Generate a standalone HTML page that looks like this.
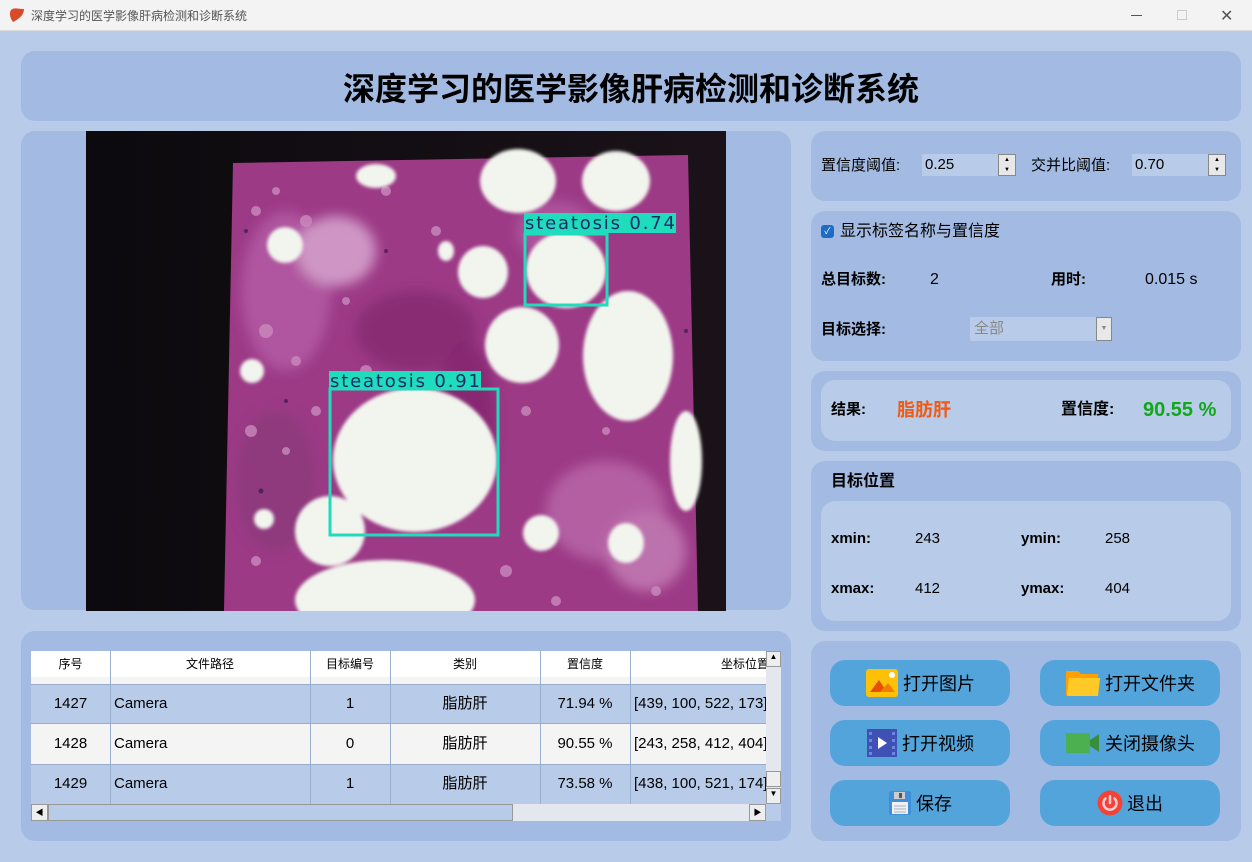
<!DOCTYPE html>
<html><head><meta charset="utf-8"><style>
*{margin:0;padding:0;box-sizing:border-box}
body{width:1252px;height:862px;position:relative;overflow:hidden;background:#b8cbe8;font-family:"Liberation Sans","Noto Sans CJK SC",sans-serif;color:#000}
.a{position:absolute}
.p{position:absolute;background:#a3bbe2;border-radius:14px}
.in{position:absolute;background:#b8cbe8;border-radius:14px}
.btn{position:absolute;width:180px;height:46px;background:#54a4dc;border-radius:15px;font-size:18px;display:flex;align-items:center;justify-content:center;gap:4px}
.t{font-size:15px;line-height:20px}
.b{font-weight:bold}
.cell{position:absolute;font-size:15px;text-align:center;line-height:40px}
.vl{position:absolute;width:1px;background:#9aaed0}
</style></head><body>
<div class="a" style="left:0;top:0;width:1252px;height:31px;background:#f3f3f3;border-bottom:1px solid #ddd"></div>
<svg class="a" style="left:9px;top:7px" width="16" height="16" viewBox="0 0 16 16"><path d="M2 3 C5 0 9 2 15 2 C15 8 10 12 4 15 C1 11 0 6 2 3Z" fill="#d94a2a"/></svg>
<div class="a" style="left:31px;top:7px;font-size:12px;color:#555">深度学习的医学影像肝病检测和诊断系统</div>
<div class="a" style="left:1131px;top:15px;width:11px;height:1px;background:#555"></div>
<div class="a" style="left:1177px;top:10px;width:10px;height:10px;border:1px solid #ccc"></div>
<div class="a" style="left:1220px;top:6px;font-size:16px;color:#555">✕</div>

<div class="p" style="left:21px;top:51px;width:1220px;height:70px"></div>
<div class="a b" style="left:21px;top:64px;width:1220px;text-align:center;font-size:32px">深度学习的医学影像肝病检测和诊断系统</div>

<div class="p" style="left:21px;top:131px;width:770px;height:479px"></div>
<svg class="a" style="left:86px;top:131px" width="640" height="480" viewBox="0 0 640 480">
<defs><filter id="bl"><feGaussianBlur stdDeviation="6"/></filter><filter id="bl2"><feGaussianBlur stdDeviation="1.5"/></filter>
<linearGradient id="lg" x1="0" x2="1"><stop offset="0" stop-color="#0c0a0e"/><stop offset="1" stop-color="#1a1218"/></linearGradient></defs>
<rect width="640" height="480" fill="url(#lg)"/>
<polygon points="147,32 602,24 612,480 138,480" fill="#9c3a86"/>
<g filter="url(#bl)" opacity=".85">
<ellipse cx="200" cy="160" rx="45" ry="80" fill="#b45aa4"/><ellipse cx="330" cy="200" rx="60" ry="40" fill="#862a72"/><ellipse cx="520" cy="380" rx="60" ry="50" fill="#b866a8"/><ellipse cx="250" cy="120" rx="40" ry="35" fill="#d8a6d0"/><ellipse cx="470" cy="100" rx="40" ry="30" fill="#b058a0"/><ellipse cx="380" cy="290" rx="30" ry="80" fill="#852870"/><ellipse cx="190" cy="350" rx="40" ry="70" fill="#8c3a7c"/><ellipse cx="560" cy="420" rx="40" ry="40" fill="#c27cb4"/>
</g>
<g fill="#c98abd" opacity=".8">
<circle cx="170" cy="80" r="5"/><circle cx="190" cy="60" r="4"/><circle cx="220" cy="90" r="6"/><circle cx="180" cy="200" r="7"/><circle cx="210" cy="230" r="5"/><circle cx="165" cy="300" r="6"/><circle cx="200" cy="320" r="4"/><circle cx="230" cy="280" r="5"/><circle cx="280" cy="240" r="6"/><circle cx="170" cy="430" r="5"/><circle cx="420" cy="440" r="6"/><circle cx="470" cy="470" r="5"/><circle cx="350" cy="100" r="5"/><circle cx="260" cy="170" r="4"/><circle cx="300" cy="60" r="5"/><circle cx="570" cy="460" r="5"/><circle cx="520" cy="300" r="4"/><circle cx="440" cy="280" r="5"/>
</g>
<g fill="#3a1850" opacity=".7">
<circle cx="160" cy="100" r="2"/><circle cx="200" cy="270" r="2"/><circle cx="175" cy="360" r="2.5"/><circle cx="540" cy="410" r="2"/><circle cx="600" cy="200" r="2"/><circle cx="460" cy="390" r="2"/><circle cx="300" cy="120" r="2"/></g>
<g filter="url(#bl2)" fill="#f2f4ee">
<ellipse cx="329" cy="329" rx="82" ry="72"/>
<ellipse cx="480" cy="139" rx="40" ry="38"/>
<ellipse cx="432" cy="50" rx="38" ry="32"/>
<ellipse cx="530" cy="50" rx="34" ry="30"/>
<ellipse cx="397" cy="141" rx="25" ry="26"/>
<ellipse cx="436" cy="214" rx="37" ry="38"/>
<ellipse cx="542" cy="225" rx="45" ry="65"/>
<ellipse cx="299" cy="469" rx="90" ry="40"/>
<ellipse cx="244" cy="400" rx="35" ry="35"/>
<ellipse cx="199" cy="114" rx="18" ry="18"/>
<ellipse cx="290" cy="45" rx="20" ry="12"/>
<ellipse cx="600" cy="330" rx="16" ry="50"/>
<ellipse cx="455" cy="402" rx="18" ry="18"/>
<ellipse cx="540" cy="412" rx="18" ry="20"/>
<ellipse cx="178" cy="388" rx="10" ry="10"/>
<ellipse cx="240" cy="470" rx="25" ry="18"/>
<ellipse cx="166" cy="240" rx="12" ry="12"/>
<ellipse cx="360" cy="120" rx="8" ry="10"/>
</g>
<g fill="none" stroke="#1fdcbc" stroke-width="3">
<rect x="439" y="103" width="82" height="71"/>
<rect x="244" y="258" width="168" height="146"/>
</g>
<rect x="438" y="82" width="152" height="20" fill="#1fdcbc"/>
<rect x="243" y="240" width="152" height="19" fill="#1fdcbc"/>
<text x="439" y="98" font-family="DejaVu Sans,sans-serif" font-size="18" fill="#1c2c66" textLength="150">steatosis  0.74</text>
<text x="244" y="256" font-family="DejaVu Sans,sans-serif" font-size="18" fill="#1c2c66" textLength="150">steatosis  0.91</text>
</svg>

<div class="p" style="left:21px;top:631px;width:770px;height:210px"></div>
<div class="a" style="left:31px;top:651px;width:750px;height:170px;background:#f4f4f4;overflow:hidden">
<div class="a" style="left:0;top:0;width:735px;height:26px;background:#fff"></div>
<div class="a" style="left:0;top:33px;width:735px;height:40px;background:#b8cbe8;border-top:1px solid #9aaed0;border-bottom:1px solid #9aaed0"></div>
<div class="a" style="left:0;top:113px;width:735px;height:40px;background:#b8cbe8;border-top:1px solid #9aaed0"></div>
<div class="vl" style="left:79px;top:0;height:153px"></div><div class="vl" style="left:279px;top:0;height:153px"></div><div class="vl" style="left:359px;top:0;height:153px"></div><div class="vl" style="left:509px;top:0;height:153px"></div><div class="vl" style="left:599px;top:0;height:153px"></div>
<div class="cell" style="left:0;top:-7px;width:79px;font-size:12px">序号</div>
<div class="cell" style="left:79px;top:-7px;width:200px;font-size:12px">文件路径</div>
<div class="cell" style="left:279px;top:-7px;width:80px;font-size:12px">目标编号</div>
<div class="cell" style="left:359px;top:-7px;width:150px;font-size:12px">类别</div>
<div class="cell" style="left:509px;top:-7px;width:90px;font-size:12px">置信度</div>
<div class="cell" style="left:599px;top:-7px;width:230px;font-size:12px">坐标位置</div>
<div class="cell" style="left:0;top:33px;width:79px">1427</div><div class="cell" style="left:83px;top:33px;text-align:left">Camera</div><div class="cell" style="left:279px;top:33px;width:80px">1</div><div class="cell" style="left:359px;top:33px;width:150px">脂肪肝</div><div class="cell" style="left:509px;top:33px;width:90px">71.94 %</div><div class="cell" style="left:603px;top:33px;text-align:left;white-space:nowrap">[439, 100, 522, 173]</div>
<div class="cell" style="left:0;top:73px;width:79px">1428</div><div class="cell" style="left:83px;top:73px;text-align:left">Camera</div><div class="cell" style="left:279px;top:73px;width:80px">0</div><div class="cell" style="left:359px;top:73px;width:150px">脂肪肝</div><div class="cell" style="left:509px;top:73px;width:90px">90.55 %</div><div class="cell" style="left:603px;top:73px;text-align:left;white-space:nowrap">[243, 258, 412, 404]</div>
<div class="cell" style="left:0;top:113px;width:79px">1429</div><div class="cell" style="left:83px;top:113px;text-align:left">Camera</div><div class="cell" style="left:279px;top:113px;width:80px">1</div><div class="cell" style="left:359px;top:113px;width:150px">脂肪肝</div><div class="cell" style="left:509px;top:113px;width:90px">73.58 %</div><div class="cell" style="left:603px;top:113px;text-align:left;white-space:nowrap">[438, 100, 521, 174]</div>
<div class="a" style="left:735px;top:0;width:15px;height:153px;background:#e4e8ee"></div>
<div class="a" style="left:735px;top:0;width:15px;height:16px;background:#eee;border:1px solid #999;font-size:8px;text-align:center">▲</div>
<div class="a" style="left:735px;top:120px;width:15px;height:16px;background:#eee;border:1px solid #999"></div>
<div class="a" style="left:735px;top:137px;width:15px;height:16px;background:#eee;border:1px solid #999;font-size:8px;text-align:center">▼</div>
<div class="a" style="left:0;top:153px;width:735px;height:17px;background:#e4e8ee"></div>
<div class="a" style="left:0;top:153px;width:17px;height:17px;background:#eee;border:1px solid #999;font-size:8px;text-align:center;line-height:15px">◀</div>
<div class="a" style="left:17px;top:153px;width:465px;height:17px;background:#b8cbe8;border:1px solid #999"></div>
<div class="a" style="left:718px;top:153px;width:17px;height:17px;background:#eee;border:1px solid #999;font-size:8px;text-align:center;line-height:15px">▶</div>
<div class="a" style="left:735px;top:153px;width:15px;height:17px;background:#b8cbe8"></div>
</div>

<div class="p" style="left:811px;top:131px;width:430px;height:70px"></div>
<div class="a t" style="left:821px;top:156px">置信度阈值:</div>
<div class="a" style="left:922px;top:154px;width:76px;height:22px;background:#b8cbe8;font-size:15px;line-height:22px;padding:0 3px">0.25</div>
<div class="a" style="left:998px;top:154px;width:18px;height:22px;background:#e8e8e8;border:1px solid #888;font-size:6px;line-height:10px;text-align:center">▲<br>▼</div>
<div class="a t" style="left:1031px;top:156px">交并比阈值:</div>
<div class="a" style="left:1132px;top:154px;width:76px;height:22px;background:#b8cbe8;font-size:15px;line-height:22px;padding:0 3px">0.70</div>
<div class="a" style="left:1208px;top:154px;width:18px;height:22px;background:#e8e8e8;border:1px solid #888;font-size:6px;line-height:10px;text-align:center">▲<br>▼</div>

<div class="p" style="left:811px;top:211px;width:430px;height:150px"></div>
<div class="a" style="left:821px;top:225px;width:13px;height:13px;background:#1f6cc6;border-radius:3px;color:#fff;font-size:9px;text-align:center;line-height:13px">✓</div>
<div class="a" style="left:840px;top:221px;font-size:16px;line-height:22px">显示标签名称与置信度</div>
<div class="a b t" style="left:821px;top:270px">总目标数:</div>
<div class="a" style="left:930px;top:269px;font-size:16px;line-height:22px">2</div>
<div class="a b t" style="left:1051px;top:270px">用时:</div>
<div class="a" style="left:1145px;top:269px;font-size:16px;line-height:22px">0.015 s</div>
<div class="a b t" style="left:821px;top:320px">目标选择:</div>
<div class="a" style="left:970px;top:317px;width:127px;height:24px;background:#b8cbe8;color:#888;font-size:15px;line-height:24px;padding:0 4px">全部</div>
<div class="a" style="left:1096px;top:317px;width:16px;height:24px;background:#e8e8e8;border:1px solid #888;font-size:7px;color:#888;text-align:center;line-height:22px">▼</div>

<div class="p" style="left:811px;top:371px;width:430px;height:80px"></div>
<div class="in" style="left:821px;top:380px;width:410px;height:61px"></div>
<div class="a b t" style="left:831px;top:400px">结果:</div>
<div class="a b" style="left:897px;top:398px;font-size:18px;line-height:24px;color:#f05a14">脂肪肝</div>
<div class="a b" style="left:1061px;top:400px;font-size:16px;line-height:20px">置信度:</div>
<div class="a b" style="left:1143px;top:398px;font-size:20px;line-height:24px;color:#10a818">90.55 %</div>

<div class="p" style="left:811px;top:461px;width:430px;height:170px"></div>
<div class="a b" style="left:831px;top:471px;font-size:16px;line-height:22px">目标位置</div>
<div class="in" style="left:821px;top:501px;width:410px;height:120px"></div>
<div class="a b t" style="left:831px;top:529px">xmin:</div><div class="a t" style="left:915px;top:529px">243</div>
<div class="a b t" style="left:1021px;top:529px">ymin:</div><div class="a t" style="left:1105px;top:529px">258</div>
<div class="a b t" style="left:831px;top:579px">xmax:</div><div class="a t" style="left:915px;top:579px">412</div>
<div class="a b t" style="left:1021px;top:579px">ymax:</div><div class="a t" style="left:1105px;top:579px">404</div>

<div class="p" style="left:811px;top:641px;width:430px;height:200px"></div>
<div class="btn" style="left:830px;top:660px"><svg width="34" height="30" viewBox="0 0 34 30"><rect x="1" y="1" width="32" height="28" rx="3" fill="#ffc107"/><path d="M5 24 L14 12 L22 24Z" fill="#e65100"/><path d="M15 24 L23 15 L30 24Z" fill="#f57c00"/><circle cx="27" cy="7" r="3" fill="#fff"/></svg>打开图片</div>
<div class="btn" style="left:1040px;top:660px"><svg width="36" height="28" viewBox="0 0 36 28"><path d="M1 2 H13 L16 5 H33 V26 H1Z" fill="#ffa000"/><path d="M4 9 H35 L33 27 H2Z" fill="#ffca28"/></svg>打开文件夹</div>
<div class="btn" style="left:830px;top:720px"><svg width="32" height="30" viewBox="0 0 32 30"><rect x="1" y="1" width="30" height="28" fill="#3f51b5"/><g fill="#6f86e0"><rect x="3" y="4" width="3" height="3"/><rect x="3" y="11" width="3" height="3"/><rect x="3" y="18" width="3" height="3"/><rect x="3" y="24" width="3" height="3"/><rect x="26" y="4" width="3" height="3"/><rect x="26" y="11" width="3" height="3"/><rect x="26" y="18" width="3" height="3"/><rect x="26" y="24" width="3" height="3"/></g><path d="M12 9 L21 15 L12 21Z" fill="#fff"/></svg>打开视频</div>
<div class="btn" style="left:1040px;top:720px"><svg width="36" height="22" viewBox="0 0 36 22"><rect x="1" y="1" width="24" height="20" rx="2" fill="#4caf50"/><path d="M25 8 L34 2 V20 L25 14Z" fill="#388e3c"/></svg>关闭摄像头</div>
<div class="btn" style="left:830px;top:780px"><svg width="24" height="26" viewBox="0 0 24 26"><rect x="1" y="1" width="22" height="24" rx="2" fill="#3f8fd8"/><rect x="6" y="2" width="11" height="7" fill="#ccc"/><rect x="11" y="3" width="3" height="5" fill="#555"/><rect x="4" y="12" width="16" height="12" fill="#eef2f6"/><g stroke="#aab" stroke-width="1"><line x1="6" y1="16" x2="18" y2="16"/><line x1="6" y1="19" x2="18" y2="19"/><line x1="6" y1="22" x2="18" y2="22"/></g></svg>保存</div>
<div class="btn" style="left:1040px;top:780px"><svg width="26" height="26" viewBox="0 0 26 26"><circle cx="13" cy="13" r="12.5" fill="#f44336"/><path d="M8.5 8.5 A6.5 6.5 0 1 0 17.5 8.5" fill="none" stroke="#ffcdd2" stroke-width="2.5" stroke-linecap="round"/><line x1="13" y1="6" x2="13" y2="13" stroke="#ffcdd2" stroke-width="2.5" stroke-linecap="round"/></svg>退出</div>
</body></html>
